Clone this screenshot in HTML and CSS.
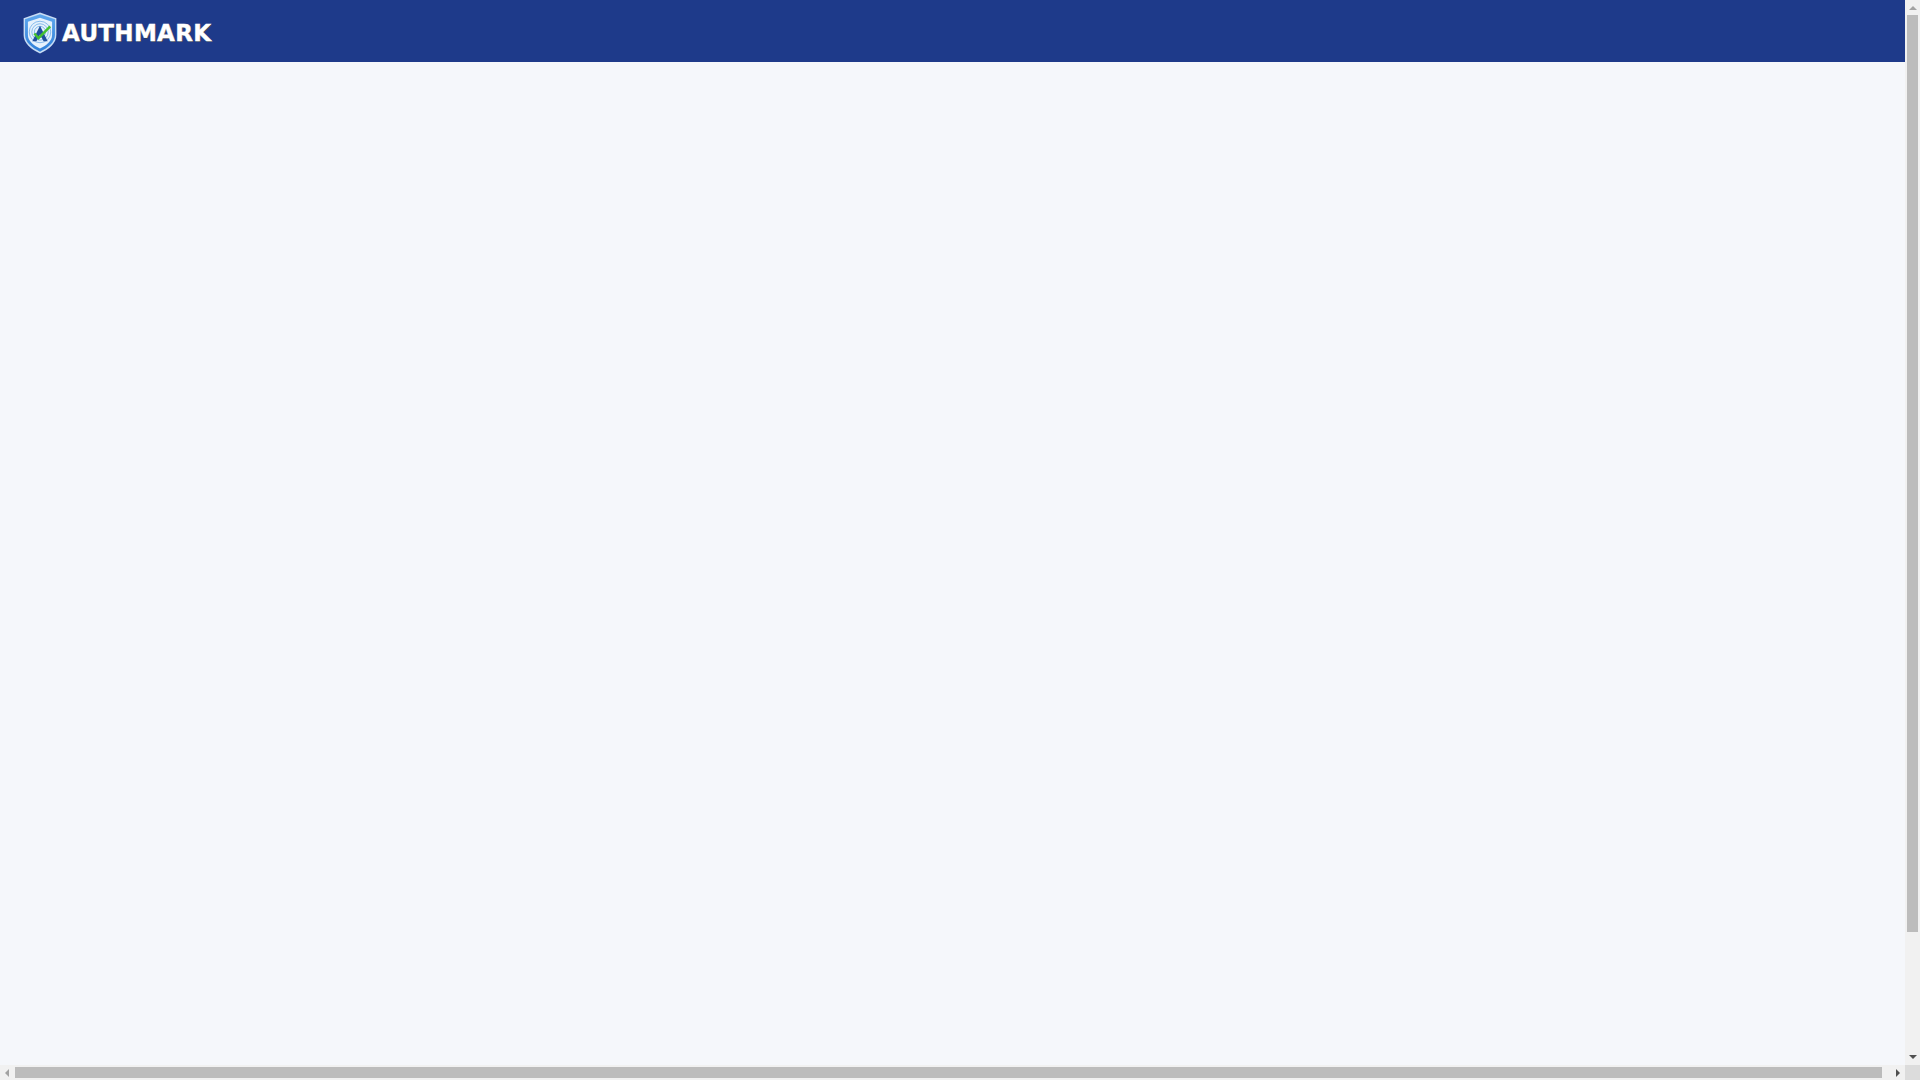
FILE: index.html
```html
<!DOCTYPE html>
<html lang="en">
<head>
    <meta charset="UTF-8">
    <meta name="viewport" content="width=device-width, initial-scale=1.0">
    <title>Authmark</title>
    <link rel="stylesheet" href="styles.css">
</head>
<body>
    <div id="frame">
        <div id="page">
            <header id="topbar">
                <a class="logo" href="#">
                    <svg class="logo-mark" viewBox="1 0.5 34 41" width="36" height="42" aria-hidden="true">
                        <defs>
                            <linearGradient id="shield-edge" x1="0" y1="0" x2="0" y2="1">
                                <stop offset="0" stop-color="#5fa8ee"/>
                                <stop offset="1" stop-color="#2f7fd8"/>
                            </linearGradient>
                        </defs>
                        <path d="M18 1 L34 6.5 L34 23 C34 31 27 37 18 41 C9 37 2 31 2 23 L2 6.5 Z" fill="#c7dcf4"/>
                        <path d="M18 2.6 L32.6 7.6 L32.6 23 C32.6 30 26 35.6 18 39.2 C10 35.6 3.4 30 3.4 23 L3.4 7.6 Z" fill="url(#shield-edge)"/>
                        <path d="M18 6 L29.8 10 L29.8 23 C29.8 28.8 24.4 33.2 18 36.2 C11.6 33.2 6.2 28.8 6.2 23 L6.2 10 Z" fill="#e6f1fc"/>
                        <g fill="none" stroke="#7fb6ea" stroke-width="0.9">
                            <circle cx="18" cy="20" r="5.5"/>
                            <circle cx="18" cy="20" r="8"/>
                            <circle cx="18" cy="20" r="10.5"/>
                        </g>
                        <path d="M18 14 L25.5 29 L21.5 29 L18 22.5 L14.5 29 L10.5 29 Z" fill="#1f4f9c"/>
                        <path d="M12.5 21.5 L16.5 26 L28 14.5" fill="none" stroke="#43c12f" stroke-width="2.4"/>
                    </svg>
                    <span class="logo-name">AUTHMARK</span>
                </a>
            </header>
        </div>

        <div class="scrollbar vertical">
            <span class="arrow up"></span>
            <div class="track"><div class="thumb"></div></div>
            <span class="arrow down"></span>
        </div>

        <div class="scrollbar horizontal">
            <span class="arrow left"></span>
            <div class="track"><div class="thumb"></div></div>
            <span class="arrow right"></span>
        </div>

        <div class="corner"></div>
    </div>
</body>
</html>
```

FILE: styles.css
```css
body{
    margin: 0;
    background-color: #f5f7fb;
}
#frame{
    display: grid;
    grid-template-columns: 1fr 15px;
    grid-template-rows: 1fr 15px;
    height: 100vh;
    overflow: hidden;
}
#topbar{
    display: flex;
    align-items: center;
    height: 62px;
    padding-left: 22px;
    background-color: #1e3a8a;
}
.logo{
    display: flex;
    align-items: center;
    gap: 4px;
    margin-top: 4px;
    text-decoration: none;
}
.logo-mark{
    flex: none;
}
.logo-name{
    font-family: "DejaVu Sans", sans-serif;
    font-size: 23px;
    font-weight: bold;
    letter-spacing: 0.3px;
    color: #ffffff;
    -webkit-text-stroke: 0.4px #ffffff;
    text-shadow: 1px 1px 0 #374151;
}

.scrollbar{
    display: flex;
    background-color: #f1f1f1;
}
.scrollbar.vertical{
    flex-direction: column;
    align-items: center;
}
.scrollbar.horizontal{
    align-items: center;
}
.track{
    flex: 1;
    display: flex;
}
.vertical .track{
    width: 11px;
    padding-bottom: 118px;
}
.horizontal .track{
    height: 11px;
    padding-right: 8px;
}
.thumb{
    flex: 1;
    background-color: #bcbcbc;
}
.corner{
    background-color: #dcdcdc;
}

.arrow{
    flex: none;
    box-sizing: border-box;
    display: flex;
    align-items: center;
    justify-content: center;
    width: 15px;
    height: 15px;
}
.arrow::before{
    content: "";
    border-style: solid;
    border-color: transparent;
}
.arrow.up::before{
    border-width: 0 4px 4px;
    border-bottom-color: #a3a3a3;
}
.arrow.down{
    padding-bottom: 1px;
}
.arrow.down::before{
    border-width: 4px 4px 0;
    border-top-color: #505050;
}
.arrow.left{
    padding-right: 1px;
}
.arrow.left::before{
    border-width: 4px 4px 4px 0;
    border-right-color: #a3a3a3;
}
.arrow.right::before{
    border-width: 4px 0 4px 4px;
    border-left-color: #505050;
}
```
